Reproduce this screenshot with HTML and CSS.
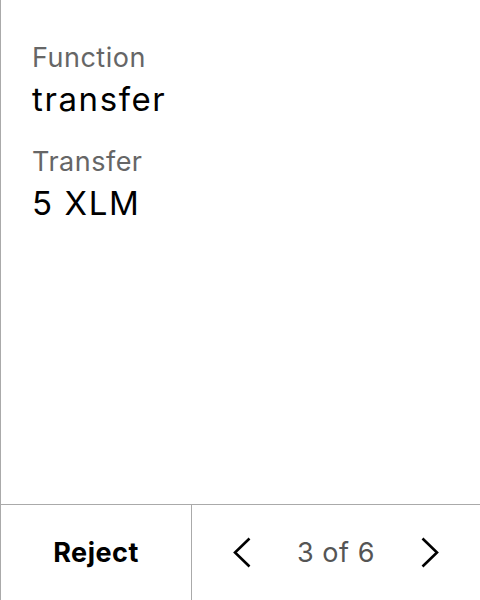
FILE: index.html
```html
<!DOCTYPE html>
<html>
<head>
<meta charset="utf-8">
<link rel="stylesheet" href="styles.css">
</head>
<body>
<div class="screen">
  <main class="content">
    <div class="field">
      <div class="label">Function</div>
      <div class="value">transfer</div>
    </div>
    <div class="field">
      <div class="label">Transfer</div>
      <div class="value">5 XLM</div>
    </div>
  </main>
  <footer class="bar">
    <div class="reject">Reject</div>
    <div class="pager">
      <svg class="chev" width="18" height="31" viewBox="0 0 18 31"><polyline points="16.5,1.5 2,15.5 16.5,29.5" fill="none" stroke="#000" stroke-width="2.6"/></svg>
      <span class="count">3 of 6</span>
      <svg class="chev" width="18" height="31" viewBox="0 0 18 31"><polyline points="1.5,1.5 16,15.5 1.5,29.5" fill="none" stroke="#000" stroke-width="2.6"/></svg>
    </div>
  </footer>
</div>
</body>
</html>
```
FILE: styles.css
```css
* { box-sizing: border-box; }
html, body { margin: 0; padding: 0; background: #fff; }
body {
  font-family: Inter, "Noto Sans", sans-serif;
  color: #000;
}
.screen {
  width: 480px;
  height: 600px;
  border-left: 1px solid #aaa;
  display: flex;
  flex-direction: column;
}
.content {
  flex: 1;
  padding: 41px 0 0 31px;
  display: flex;
  flex-direction: column;
  gap: 26px;
}
.field { display: flex; flex-direction: column; gap: 4px; }
.label { font-size: 27px; line-height: 34px; letter-spacing: 0.5px; color: #666; }
.value { font-size: 33px; line-height: 40px; letter-spacing: 1.6px; color: #000; }
.bar {
  height: 96px;
  border-top: 1px solid #aaa;
  display: grid;
  grid-template-columns: 191px 1fr;
}
.reject {
  border-right: 1px solid #aaa;
  display: flex;
  align-items: center;
  justify-content: center;
  font-size: 27px;
  font-weight: 700;
  letter-spacing: 0.5px;
}
.pager {
  display: flex;
  align-items: center;
  justify-content: center;
  gap: 46px;
}
.count { font-size: 27px; letter-spacing: 0.5px; color: #555; }
```
